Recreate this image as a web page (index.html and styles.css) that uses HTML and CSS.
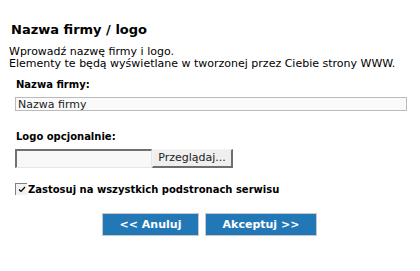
FILE: index.html
```html
<!DOCTYPE html>
<html lang="pl">

<head>
    <meta charset="UTF-8">
    <title>Nazwa firmy / logo</title>
    <link rel="stylesheet" href="styles.css">
</head>

<body>
    <div id="container">
        <h1>Nazwa firmy / logo</h1>
        <p class="intro">Wprowadź nazwę firmy i logo.<br>Elementy te będą wyświetlane w tworzonej przez Ciebie strony WWW.</p>
        <form action="" id="form">
            <div class="form-group">
                <label for="name">Nazwa firmy:</label>
                <input type="text" name="name" id="name" value="Nazwa firmy">
            </div>
            <div class="form-group">
                <label for="logo">Logo opcjonalnie:</label>
                <div class="file-row">
                    <span class="file-box" id="logo"></span>
                    <span class="file-btn">Przeglądaj...</span>
                </div>
            </div>
            <div class="check-row">
                <span class="check-box">
                    <svg width="8" height="7" viewBox="0 0 8 7"><path d="M1 3.5 L3 5.5 L7 1" fill="none" stroke="#000" stroke-width="1.2"/></svg>
                </span>
                <span class="check-label">Zastosuj na wszystkich podstronach serwisu</span>
            </div>
            <div class="buttons">
                <button type="button" class="btn btn-cancel">&lt;&lt; Anuluj</button>
                <button type="button" class="btn btn-ok">Akceptuj &gt;&gt;</button>
            </div>
        </form>
    </div>
</body>

</html>
```

FILE: styles.css
```css
body {
    margin: 0;
    background: #fff;
    font-family: "DejaVu Sans", Verdana, sans-serif;
    font-size: 11px;
    color: #000;
}

#container {
    padding: 21px 13px 0 9px;
}

h1 {
    margin: 0 0 0 2px;
    font-size: 13px;
    line-height: 17px;
    font-weight: bold;
}

.intro {
    margin: 8px 0 0 0;
    line-height: 12px;
}

#form {
    margin: 8px 0 0 6px;
}

.form-group {
    margin-bottom: 19px;
}

.form-group label {
    display: block;
    font-size: 10px;
    font-weight: bold;
    line-height: 13px;
    margin: 0 0 6px 1px;
}

#name {
    display: block;
    box-sizing: border-box;
    width: 100%;
    height: 14px;
    margin: 0;
    padding: 0 2px;
    border: 1px solid #bbb;
    background: #fafafa;
    font-family: inherit;
    font-size: 11px;
    color: #222;
}

.file-row {
    display: flex;
    height: 19px;
}

.file-box {
    width: 137px;
    box-sizing: border-box;
    border: 1px solid #e6e6e6;
    border-top: 2px solid #707070;
    border-left: 2px solid #707070;
    background: #f8f8f8;
}

.file-btn {
    width: 81px;
    height: 19px;
    box-sizing: border-box;
    border: 1px solid #f4f4f4;
    border-right: 2px solid #6e6e6e;
    border-bottom: 2px solid #6e6e6e;
    background: #efefef;
    text-align: center;
    line-height: 15px;
    color: #222;
}

.check-row {
    display: flex;
    align-items: center;
    margin-top: -4px;
}

.check-box {
    width: 12px;
    height: 12px;
    box-sizing: border-box;
    border-top: 1px solid #808080;
    border-left: 1px solid #808080;
    background: #f2f2f2;
    display: flex;
    align-items: center;
    justify-content: center;
}

.check-label {
    font-size: 10px;
    font-weight: bold;
    margin-left: 1px;
}

.buttons {
    display: flex;
    justify-content: center;
    gap: 6px;
    margin: 18px 0 0 -6px;
    padding-left: 3px;
}

.btn {
    height: 23px;
    border: 1px solid #c8c8c8;
    background: #2277b7;
    color: #fff;
    font-family: inherit;
    font-size: 11px;
    font-weight: bold;
    padding: 0;
}

.btn-cancel {
    width: 97px;
}

.btn-ok {
    width: 112px;
}
```
